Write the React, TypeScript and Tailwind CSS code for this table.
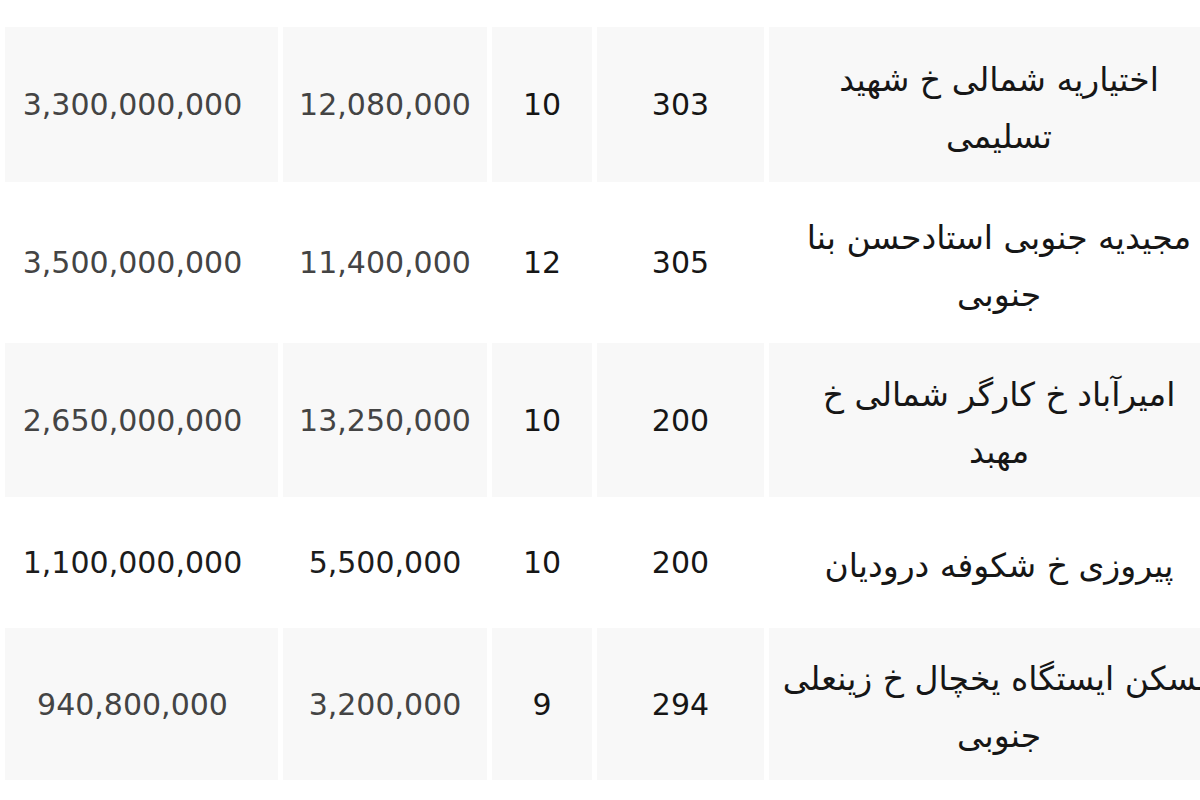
import React from "react";

type Row = {
  total: string;
  perMeter: string;
  age: string;
  area: string;
  lines: string[];
  shaded: boolean;
  height: string;
  dark?: boolean;
};

const rows: Row[] = [
  {
    total: "3,300,000,000",
    perMeter: "12,080,000",
    age: "10",
    area: "303",
    lines: ["اختیاریه شمالی خ شهید", "تسلیمی"],
    shaded: true,
    height: "h-[155px]",
  },
  {
    total: "3,500,000,000",
    perMeter: "11,400,000",
    age: "12",
    area: "305",
    lines: ["مجیدیه جنوبی استادحسن بنا", "جنوبی"],
    shaded: false,
    height: "h-[161px]",
  },
  {
    total: "2,650,000,000",
    perMeter: "13,250,000",
    age: "10",
    area: "200",
    lines: ["امیرآباد خ کارگر شمالی خ", "مهبد"],
    shaded: true,
    height: "h-[154px]",
  },
  {
    total: "1,100,000,000",
    perMeter: "5,500,000",
    age: "10",
    area: "200",
    lines: ["پیروزی خ شکوفه درودیان"],
    shaded: false,
    height: "h-[131px]",
    dark: true,
  },
  {
    total: "940,800,000",
    perMeter: "3,200,000",
    age: "9",
    area: "294",
    lines: ["مسکن ایستگاه یخچال خ زینعلی", "جنوبی"],
    shaded: true,
    height: "h-[152px]",
  },
];

function Cell({
  shaded,
  className,
  children,
}: {
  shaded: boolean;
  className: string;
  children: React.ReactNode;
}) {
  return (
    <div
      className={`${className} shrink-0 flex items-center justify-center ${
        shaded ? "bg-[#f8f8f8]" : "bg-white"
      }`}
    >
      {children}
    </div>
  );
}

export default function App() {
  return (
    <div className="w-[1200px] h-[800px] overflow-hidden bg-white pt-[27px] font-['DejaVu_Sans',sans-serif] text-[30px]">
      {rows.map((r, i) => {
        const muted = r.dark ? "text-[#1c1c1c]" : "text-[#444444]";
        return (
          <div key={i} className={`flex gap-[5px] pl-[5px] ${r.height}`}>
            <Cell shaded={r.shaded} className={`w-[273px] pr-[18px] ${muted}`}>
              {r.total}
            </Cell>
            <Cell shaded={r.shaded} className={`w-[204px] ${muted}`}>
              {r.perMeter}
            </Cell>
            <Cell shaded={r.shaded} className="w-[100px] text-[#161616]">
              {r.age}
            </Cell>
            <Cell shaded={r.shaded} className="w-[167px] text-[#161616]">
              {r.area}
            </Cell>
            <Cell
              shaded={r.shaded}
              className="w-[460px] flex-col pt-[6px] text-[33px] text-[#161616]"
            >
              {r.lines.map((l, j) => (
                <div
                  key={j}
                  dir="rtl"
                  className="whitespace-nowrap leading-[57px] flex justify-center w-full"
                >
                  {l}
                </div>
              ))}
            </Cell>
          </div>
        );
      })}
    </div>
  );
}
